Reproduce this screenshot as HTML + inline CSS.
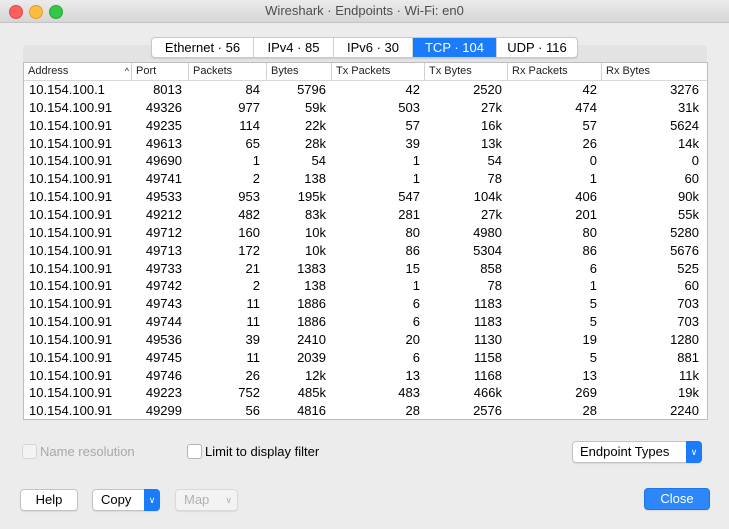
<!DOCTYPE html><html><head><style>
body{margin:0;width:729px;height:529px;background:#ececec;font-family:"Liberation Sans",sans-serif;overflow:hidden;position:relative;font-size:13px;color:#000}
.title{position:absolute;left:0;top:0;width:729px;height:22px;background:linear-gradient(#ebebeb,#d6d6d6);border-bottom:1px solid #c4c4c4;text-align:center;line-height:22px;font-size:13px;color:#4d4d4d}
.dot{position:absolute;top:5px;width:12px;height:12px;border-radius:50%}
.panel{position:absolute;left:23px;top:45px;width:684px;height:375px;background:#e3e3e3;border-radius:4px}
.tabs{position:absolute;left:151px;top:37px;height:19px;display:flex;border:1px solid #c8c8c8;border-radius:4px;background:#fff;overflow:hidden;box-shadow:0 1px 1px rgba(0,0,0,.1)}
.tabs div{line-height:19px;text-align:center;border-right:1px solid #d0d0d0;font-size:13px}
.tabs div.on{background:#1a7cfa;color:#fff}
.tbl{position:absolute;left:23px;top:62px;width:683px;height:356px;background:#fff;border:1px solid #bdbdbd;overflow:hidden}
.hd{position:absolute;top:0;height:17px;line-height:17px;font-size:11px;color:#222;background:#fff;border-bottom:1px solid #d8d8d8;width:683px}
.hd span{position:absolute;top:0;padding-left:4px;border-left:1px solid #d0d0d0;height:17px}
.r{position:absolute;left:0;height:18px;line-height:18px;width:683px}
.r span{position:absolute;top:0;text-align:right}
.chk{position:absolute;width:13px;height:13px;border:1px solid #b5b5b5;border-radius:3px;background:#fff}
.btn{position:absolute;height:20px;line-height:20px;background:#fff;border:1px solid #c3c3c3;border-radius:4px;text-align:center;box-shadow:0 1px 1px rgba(0,0,0,.08)}
.arr{position:absolute;right:-1px;top:-1px;width:16px;height:22px;background:#1a7cfa;border-radius:0 4px 4px 0;color:#fff;font-size:9px;line-height:22px;text-align:center}
</style></head><body>
<div class="title">Wireshark · Endpoints · Wi-Fi: en0
<div class="dot" style="left:9px;background:#fc605c;border:0.5px solid #de4a45"></div>
<div class="dot" style="left:29px;background:#fdbc40;border:0.5px solid #dea035"></div>
<div class="dot" style="left:49px;background:#34c84a;border:0.5px solid #27aa35"></div></div>
<div class="panel"></div>
<div class="tabs"><div style="width:101px">Ethernet · 56</div><div style="width:79px">IPv4 · 85</div><div style="width:78px">IPv6 · 30</div><div class="on" style="width:83px">TCP · 104</div><div style="width:80px;border:0">UDP · 116</div></div>
<div class="tbl">
<div class="hd"><span style="left:0;border:0;width:103px">Address<b style="position:absolute;right:2px;font-weight:normal;font-size:9px">^</b></span><span style="left:107px">Port</span><span style="left:164px">Packets</span><span style="left:242px">Bytes</span><span style="left:307px">Tx Packets</span><span style="left:400px">Tx Bytes</span><span style="left:483px">Rx Packets</span><span style="left:577px">Rx Bytes</span></div>
<div id="rows"></div>
</div>
<div class="chk" style="left:22px;top:444px;border-color:#d5d5d5;background:#f3f3f3"></div><div style="position:absolute;left:40px;top:444px;color:#a8a8a8">Name resolution</div>
<div class="chk" style="left:187px;top:444px"></div><div style="position:absolute;left:205px;top:444px">Limit to display filter</div>
<div class="btn" style="left:572px;top:441px;width:130px;text-align:left;padding-left:7px;box-sizing:border-box;height:22px">Endpoint Types<div class="arr">&#8744;</div></div>
<div class="btn" style="left:20px;top:489px;width:56px">Help</div>
<div class="btn" style="left:92px;top:489px;width:68px;text-align:left;padding-left:8px;box-sizing:border-box;height:22px">Copy<div class="arr">&#8744;</div></div>
<div class="btn" style="left:175px;top:489px;width:63px;color:#b0b0b0;background:#f3f3f3;border-color:#dadada;text-align:left;padding-left:8px;box-sizing:border-box;height:22px">Map<span style="position:absolute;right:5px;font-size:9px">&#8744;</span></div>
<div class="btn" style="left:644px;top:488px;width:64px;background:#2e86fb;border-color:#1f74e6;color:#fff">Close</div>
<script>
var d=[["10.154.100.1",8013,84,5796,42,2520,42,3276],["10.154.100.91",49326,977,"59k",503,"27k",474,"31k"],["10.154.100.91",49235,114,"22k",57,"16k",57,5624],["10.154.100.91",49613,65,"28k",39,"13k",26,"14k"],["10.154.100.91",49690,1,54,1,54,0,0],["10.154.100.91",49741,2,138,1,78,1,60],["10.154.100.91",49533,953,"195k",547,"104k",406,"90k"],["10.154.100.91",49212,482,"83k",281,"27k",201,"55k"],["10.154.100.91",49712,160,"10k",80,4980,80,5280],["10.154.100.91",49713,172,"10k",86,5304,86,5676],["10.154.100.91",49733,21,1383,15,858,6,525],["10.154.100.91",49742,2,138,1,78,1,60],["10.154.100.91",49743,11,1886,6,1183,5,703],["10.154.100.91",49744,11,1886,6,1183,5,703],["10.154.100.91",49536,39,2410,20,1130,19,1280],["10.154.100.91",49745,11,2039,6,1158,5,881],["10.154.100.91",49746,26,"12k",13,1168,13,"11k"],["10.154.100.91",49223,752,"485k",483,"466k",269,"19k"],["10.154.100.91",49299,56,4816,28,2576,28,2240]];
var rights=[158,236,302,396,478,573,675],h="";
d.forEach(function(r,i){h+='<div class="r" style="top:'+(18+i*17.85)+'px"><span style="left:5px;text-align:left">'+r[0]+'</span>';
for(var j=1;j<8;j++)h+='<span style="right:'+(683-rights[j-1])+'px">'+r[j]+'</span>';h+='</div>';});
document.getElementById("rows").innerHTML=h;
</script>
</body></html>
